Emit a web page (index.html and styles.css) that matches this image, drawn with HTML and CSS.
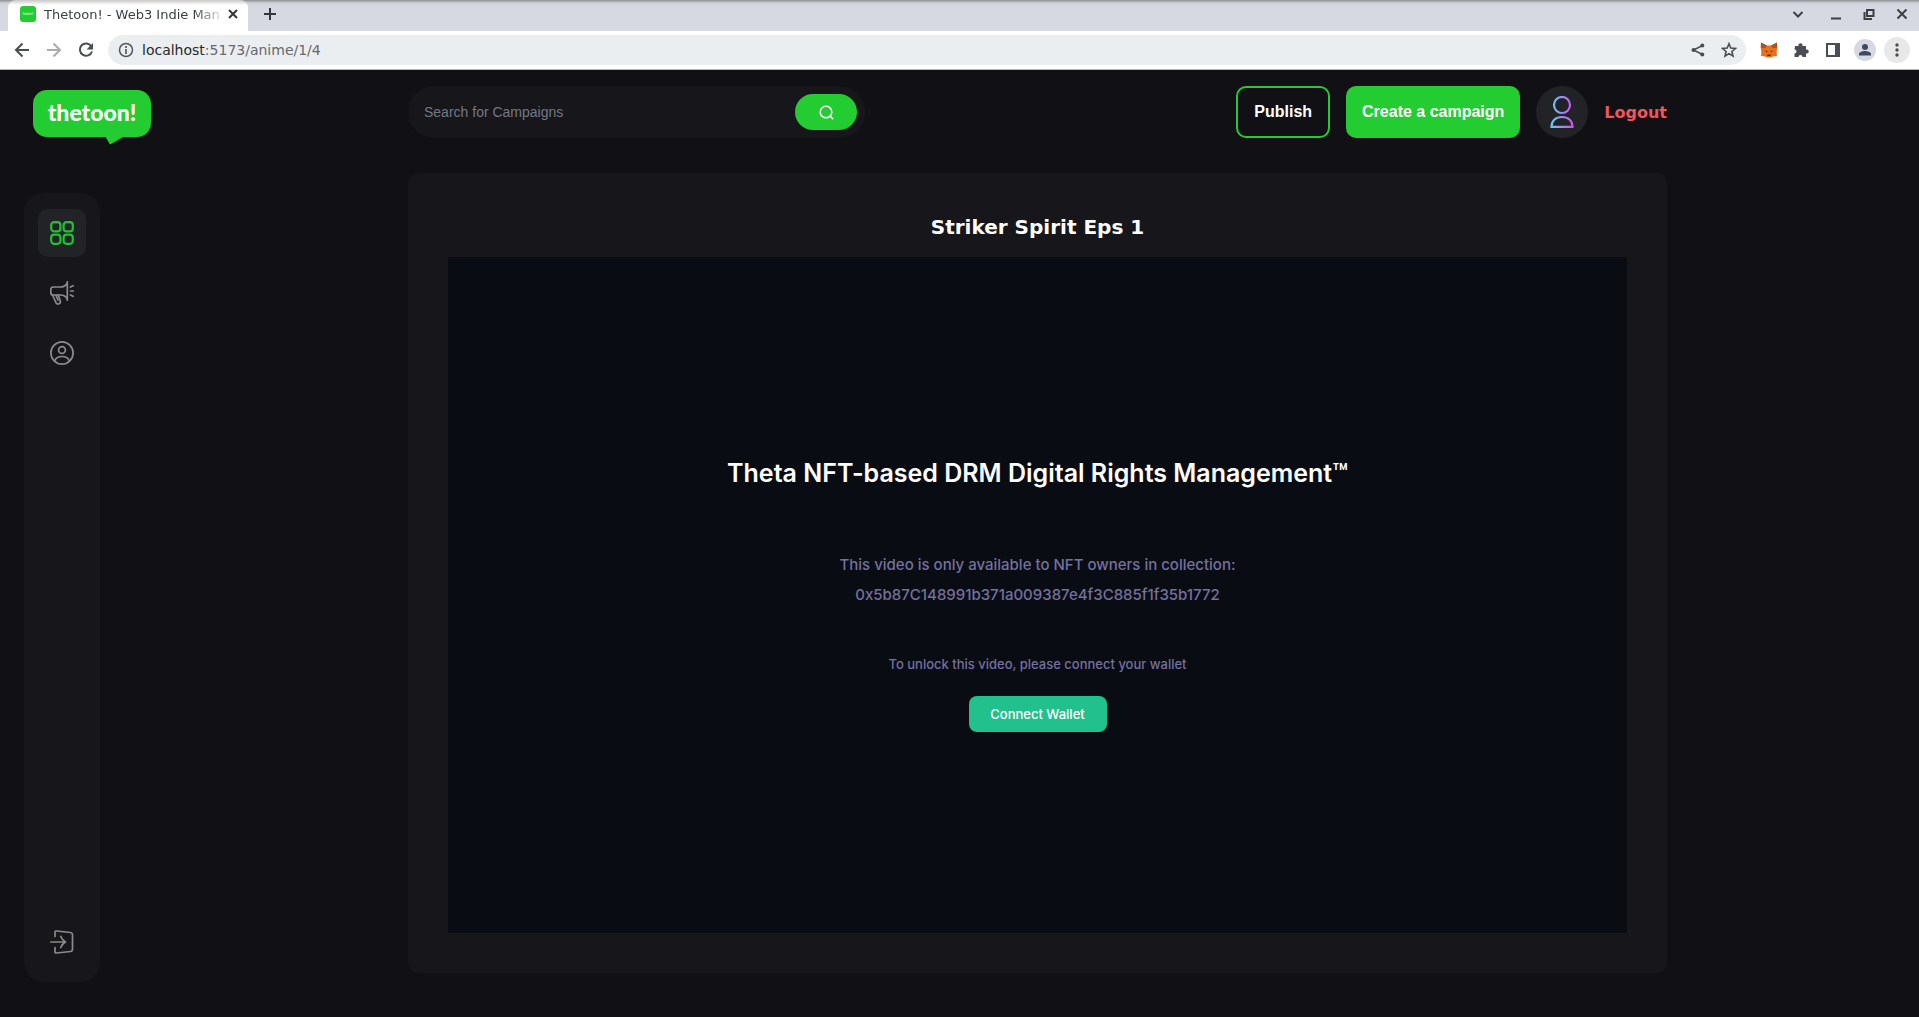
FILE: index.html
```html
<!DOCTYPE html>
<html lang="en">

<head>
  <meta charset="UTF-8" />
  <meta name="viewport" content="width=device-width, initial-scale=1" />
  <title>Thetoon! - Web3 Indie Manga</title>
  <link rel="stylesheet" href="styles.css">
</head>

<body>

  <!-- Browser window -->
  <div class="browser">
    <div class="tabstrip">
      <div class="tab">
        <span class="favicon">toon!</span>
        <span class="tab-title">Thetoon! - Web3 Indie Man</span>
        <button class="tab-close" aria-label="Close tab">
          <svg width="10" height="10" viewBox="0 0 10 10"><path d="M1 1l8 8M9 1l-8 8" stroke="#33363a" stroke-width="2" /></svg>
        </button>
      </div>
      <button class="new-tab" aria-label="New tab">
        <svg width="12" height="12" viewBox="0 0 12 12"><path d="M6 0v12M0 6h12" stroke="#33363a" stroke-width="2" /></svg>
      </button>
      <div class="window-controls">
        <button class="win-btn win-list" aria-label="Search tabs">
          <svg width="12" height="12" viewBox="0 0 12 12"><path d="M1.500 4L6 8.500 10.500 4" fill="none" stroke="#3c4043" stroke-width="2" /></svg>
        </button>
        <button class="win-btn" aria-label="Minimize">
          <svg width="12" height="12" viewBox="0 0 12 12"><path d="M1 10.500h10" stroke="#3c4043" stroke-width="2" /></svg>
        </button>
        <button class="win-btn" aria-label="Restore">
          <svg width="12" height="12" viewBox="0 0 12 12"><path d="M4 2h6.500v6H4zM1.500 4v7H9" fill="none" stroke="#3c4043" stroke-width="2" /></svg>
        </button>
        <button class="win-btn" aria-label="Close">
          <svg width="12" height="12" viewBox="0 0 12 12"><path d="M1.500 1.500l9 9M10.500 1.500l-9 9" stroke="#3c4043" stroke-width="2" /></svg>
        </button>
      </div>
    </div>

    <div class="toolbar">
      <button class="tool" aria-label="Back">
        <svg width="16" height="16" viewBox="0 0 16 16"><path d="M15 8H2M8.500 1.500L2 8l6.500 6.500" fill="none" stroke="#4a4d51" stroke-width="2" /></svg>
      </button>
      <button class="tool" aria-label="Forward">
        <svg width="16" height="16" viewBox="0 0 16 16"><path d="M1 8h13M7.500 1.500L14 8l-6.500 6.500" fill="none" stroke="#a9abae" stroke-width="2" /></svg>
      </button>
      <button class="tool" aria-label="Reload">
        <svg width="16" height="16" viewBox="0 0 16 16"><path d="M13.300 4.200A6.200 6.200 0 1 0 14 9.500" fill="none" stroke="#4a4d51" stroke-width="2" /><path d="M15 1v6.500H8.500z" fill="#4a4d51" /></svg>
      </button>
      <div class="address">
        <svg width="16" height="16" viewBox="0 0 16 16"><circle cx="8" cy="8" r="6.500" fill="none" stroke="#55585c" stroke-width="1.500" /><path d="M8 7v5M8 4v2" stroke="#55585c" stroke-width="1.700" /></svg>
        <span class="url">localhost<span class="url-path">:5173/anime/1/4</span></span>
        <button class="tool" aria-label="Share">
          <svg width="14" height="14" viewBox="0 0 14 14"><path d="M11.500 2.500L2.500 7l9 4.500" fill="none" stroke="#4a4d51" stroke-width="1.500" /><circle cx="11.300" cy="2.500" r="2" fill="#4a4d51" /><circle cx="2.600" cy="7" r="2.100" fill="#4a4d51" /><circle cx="11.300" cy="11.500" r="2" fill="#4a4d51" /></svg>
        </button>
        <button class="tool" aria-label="Bookmark">
          <svg width="16" height="16" viewBox="0 0 16 16"><path d="M8 1.800l1.800 4.300 4.700.4-3.600 3 1.100 4.600L8 11.600l-4 2.500 1.100-4.600-3.600-3 4.700-.4z" fill="none" stroke="#4a4d51" stroke-width="1.600" /></svg>
        </button>
      </div>
      <div class="extensions">
        <button class="ext" aria-label="MetaMask">
          <svg width="18" height="16" viewBox="0 0 18 16">
            <path d="M1 .5l6 3h4l6-3 .2 5.500-.6 4 .4 4-4 .5-2 1H7l-2-1-4-.5.4-4-.6-4z" fill="#e8701c" />
            <path d="M1 .5l6 3L5.500 6 .8 6zM17 .5l-6 3L12.500 6h4.700z" fill="#a9532a" />
            <path d="M5 8.500l2.500.5-.5 1.500zM13 8.500l-2.500.5.5 1.500zM7.500 12.500h3l.3 1.500H7.200z" fill="#30333a" />
          </svg>
        </button>
        <button class="ext" aria-label="Extensions">
          <svg width="16" height="16" viewBox="0 0 16 16"><path d="M2 4h3.500a2.100 2.100 0 1 1 4 0H13v3.500a2.100 2.100 0 1 1 0 4V15H9.500a2 2 0 0 0-4 0H1.500v-3.500a2 2 0 0 0 0-4z" fill="#4a4d51" /></svg>
        </button>
        <button class="ext" aria-label="Side panel">
          <svg width="14" height="14" viewBox="0 0 14 14"><path d="M1 1h12v12H1z" fill="none" stroke="#4a4d51" stroke-width="2" /><path d="M9 1h5v12H9z" fill="#4a4d51" /></svg>
        </button>
        <button class="ext ext-profile" aria-label="Profile">
          <svg width="14" height="14" viewBox="0 0 14 14"><circle cx="7" cy="4" r="3" fill="#414960" /><path d="M1 12.500V11c0-2 3.500-3 6-3s6 1 6 3v1.500z" fill="#414960" /></svg>
        </button>
        <button class="ext ext-menu" aria-label="Menu">
          <svg width="4" height="16" viewBox="0 0 4 16"><g fill="#4a4d51"><circle cx="2" cy="3" r="1.700" /><circle cx="2" cy="8" r="1.700" /><circle cx="2" cy="13" r="1.700" /></g></svg>
        </button>
      </div>
    </div>
  </div>

  <!-- App -->
  <div class="app">
    <aside class="side">
      <a class="logo" href="#">thetoon!
        <svg class="logo-tail" width="20" height="9" viewBox="0 0 20 9"><path d="M0 0h20L5 8.500z" fill="#22cc31" /></svg>
      </a>
      <nav class="sidebar">
        <div class="sidebar-links">
          <a class="side-link active" href="#" aria-label="Dashboard">
            <svg width="24" height="24" viewBox="0 0 24 24" fill="none" stroke="#1fc232" stroke-width="2.200"><rect x="1.200" y="1.200" width="9.200" height="9.200" rx="3" /><rect x="13.600" y="1.200" width="9.200" height="9.200" rx="3" /><rect x="1.200" y="13.600" width="9.200" height="9.200" rx="3" /><rect x="13.600" y="13.600" width="9.200" height="9.200" rx="3" /></svg>
          </a>
          <a class="side-link" href="#" aria-label="Campaigns">
            <svg width="24" height="24" viewBox="0 0 24 24" fill="none" stroke="#8b8b8b" stroke-width="1.700" stroke-linecap="round" stroke-linejoin="round">
              <path d="M17.300.8v18.400M17.300 2c-1.500 2.500-3.500 4-6.500 4H3.300C1.800 6 .8 7 .8 8.500v3c0 1.500 1 2.500 2.500 2.500h7.500c3 0 5 1.500 6.500 4" />
              <path d="M2.500 14l3.500 7.700c1.500 2.500 5 1 4.300-1.700L8.300 14M6 14.500l2 4.500" />
              <path d="M20.500 6l2.600-1.300M20.500 10h3M20.500 14l2.600 1.300" />
            </svg>
          </a>
          <a class="side-link" href="#" aria-label="Profile">
            <svg width="24" height="24" viewBox="0 0 24 24" fill="none" stroke="#8b8b8b" stroke-width="1.700"><circle cx="12" cy="12" r="11.100" /><circle cx="12" cy="9" r="3.400" /><path d="M4.500 20c1.200-3 4-4.500 7.500-4.500s6.300 1.500 7.500 4.500" /></svg>
          </a>
        </div>
        <a class="side-link" href="#" aria-label="Logout">
          <svg width="24" height="24" viewBox="0 0 24 24" fill="none" stroke="#8b8b8b" stroke-width="1.700" stroke-linecap="round" stroke-linejoin="round">
            <path d="M5 6.500V2.300C5 1.300 5.500.9 6.500 1L20.500 2.500c1.300.2 2 .8 2 2v15c0 1.200-.7 1.800-2 2L6.500 23C5.500 23.100 5 22.700 5 21.700V17.500" />
            <path d="M.8 12H15.500M10.800 6.500c1 2.500 2.700 4.500 4.700 5.500-2 1-3.700 3-4.700 5.500" />
          </svg>
        </a>
      </nav>
    </aside>

    <main class="main">
      <header class="header">
        <form class="search">
          <input type="text" placeholder="Search for Campaigns" aria-label="Search for Campaigns">
          <button type="button" aria-label="Search">
            <svg width="15" height="15" viewBox="0 0 15 15" fill="none" stroke="#fff" stroke-width="1.500" stroke-linecap="round"><circle cx="7" cy="7" r="5.800" /><path d="M11.200 11.200l2.600 2.600" /></svg>
          </button>
        </form>
        <div class="actions">
          <button class="btn btn-outline">Publish</button>
          <button class="btn">Create a campaign</button>
          <a class="avatar" href="#" aria-label="Your profile">
            <svg width="24" height="32" viewBox="0 0 24 32" fill="none" stroke="url(#avatarGradient)" stroke-width="2.200">
              <defs>
                <linearGradient id="avatarGradient" gradientUnits="userSpaceOnUse" x1="1" y1="0" x2="23" y2="0">
                  <stop offset="0" stop-color="#62cdf5" />
                  <stop offset="1" stop-color="#d44ee8" />
                </linearGradient>
              </defs>
              <circle cx="12" cy="9" r="8" />
              <path d="M1.500 30.800C1.500 24.500 6 21 12 21s10.500 3.500 10.500 9.800z" />
            </svg>
          </a>
          <a class="logout" href="#">Logout</a>
        </div>
      </header>

      <section class="card">
        <h1>Striker Spirit Eps 1</h1>
        <div class="player">
          <h2>Theta NFT-based DRM Digital Rights Management™</h2>
          <p class="collection">This video is only available to NFT owners in collection:<br>0x5b87C148991b371a009387e4f3C885f1f35b1772</p>
          <p class="hint">To unlock this video, please connect your wallet</p>
          <button class="connect">Connect Wallet</button>
        </div>
      </section>
    </main>
  </div>

</body>

</html>
```

FILE: styles.css
```css
* {
  box-sizing: border-box;
}

body {
  margin: 0;
  min-height: 100vh;
  display: flex;
  flex-direction: column;
  background: #111014;
  font-family: "DejaVu Sans", sans-serif;
}

button {
  border: none;
  padding: 0;
  background: none;
  cursor: pointer;
}

a {
  text-decoration: none;
}

svg {
  display: block;
  flex: none;
}

/* Browser window */
.browser {
  background: #fff;
  border-bottom: 1px solid #b4b6b9;
}

.tabstrip {
  display: flex;
  align-items: center;
  height: 31px;
  padding: 0 11px 0 8px;
  background: linear-gradient(#8e9095, #cdd0d7 3px, #d6d9e1 6px);
}

.tab {
  display: flex;
  align-items: center;
  width: 240px;
  height: 31px;
  padding: 0 11px 3px 12px;
  gap: 8px;
  border-radius: 8px 8px 0 0;
  background: linear-gradient(#c8c8c8, #fff 5px);
}

.favicon {
  flex: none;
  width: 16px;
  height: 16px;
  border-radius: 3px;
  background: #22cc31;
  color: #fff;
  font-size: 4px;
  line-height: 16px;
  text-align: center;
}

.tab-title {
  flex: 1;
  white-space: nowrap;
  font-size: 13px;
  color: #3c4043;
  mask-image: linear-gradient(to right, #000 85%, rgba(0, 0, 0, 0.2));
}

.new-tab {
  margin: 0 0 3px 16px;
}

.window-controls {
  display: flex;
  gap: 21px;
  margin: 0 0 3px auto;
}

.win-list {
  margin-right: 5px;
}

.toolbar {
  display: flex;
  align-items: center;
  height: 38px;
  padding: 0 9px 0 14px;
  gap: 16px;
}

.address {
  flex: 1;
  display: flex;
  align-items: center;
  height: 30px;
  margin-left: -2px;
  padding: 0 9px 0 10px;
  gap: 8px;
  border-radius: 15px;
  background: #ebeef0;
}

.url {
  flex: 1;
  font-size: 14px;
  color: #26282b;
}

.url-path {
  color: #66696d;
}

.address .tool {
  margin-left: 8px;
}

.extensions {
  display: flex;
  align-items: center;
  gap: 6px;
  margin-left: -6px;
}

.ext {
  display: flex;
  align-items: center;
  justify-content: center;
  width: 26px;
  height: 26px;
}

.ext-profile,
.ext-menu {
  border-radius: 50%;
}

.ext-profile {
  width: 22px;
  height: 22px;
  margin: 0 2px;
  background: #d6d9e1;
}

.ext-menu {
  background: #e8e8e8;
}

/* App layout */
.app {
  flex: 1;
  display: flex;
  padding: 16px 24px;
}

.side {
  flex: none;
  display: flex;
  flex-direction: column;
  width: 137px;
  margin: 4px 40px 19px 0;
}

.logo {
  position: relative;
  width: 118px;
  height: 47px;
  margin: 0 0 56px 9px;
  border-radius: 14px;
  background: #22cc31;
  color: #fff;
  font-family: Lato, sans-serif;
  font-size: 23px;
  font-weight: 900;
  line-height: 44px;
  text-align: center;
}

.logo-tail {
  position: absolute;
  left: 72px;
  top: 46px;
}

.sidebar {
  flex: 1;
  display: flex;
  flex-direction: column;
  justify-content: space-between;
  align-items: center;
  width: 76px;
  padding: 16px 0;
  border-radius: 20px;
  background: #17161b;
}

.sidebar-links {
  display: flex;
  flex-direction: column;
  gap: 12px;
}

.side-link {
  display: flex;
  align-items: center;
  justify-content: center;
  width: 48px;
  height: 48px;
  border-radius: 10px;
}

.side-link.active {
  background: #212326;
}

.main {
  flex: 1;
  display: flex;
  flex-direction: column;
  max-width: 1280px;
  margin: 0 auto 28px;
  padding-right: 21px;
}

/* Header */
.header {
  display: flex;
  justify-content: space-between;
  gap: 24px;
  margin-bottom: 35px;
}

.search {
  flex: 1;
  display: flex;
  max-width: 457px;
  height: 52px;
  padding: 8px 8px 8px 16px;
  border-radius: 26px;
  background: #17161b;
}

.search input {
  flex: 1;
  min-width: 0;
  padding: 0;
  border: none;
  outline: none;
  background: transparent;
  color: #fff;
  font-family: "Liberation Sans", sans-serif;
  font-size: 14px;
}

.search input::placeholder {
  color: #737885;
}

.search button {
  display: flex;
  align-items: center;
  justify-content: center;
  width: 62px;
  border-radius: 20px;
  background: #22cc31;
}

.actions {
  display: flex;
  align-items: center;
  gap: 16px;
}

.btn {
  height: 52px;
  padding: 0 16px;
  border-radius: 10px;
  background: #22cc31;
  color: #fff;
  font-family: "Liberation Sans", sans-serif;
  font-size: 16px;
  font-weight: bold;
}

.btn-outline {
  border: 2px solid #22cc31;
  background: transparent;
}

.avatar {
  display: flex;
  align-items: center;
  justify-content: center;
  width: 52px;
  height: 52px;
  border-radius: 50%;
  background: #212326;
}

.logout {
  color: #f0555a;
  font-size: 16px;
  font-weight: bold;
}

/* Video card */
.card {
  flex: 1;
  display: flex;
  flex-direction: column;
  padding: 40px;
  border-radius: 10px;
  background: #17161b;
}

h1 {
  margin: 0 0 16px;
  color: #fff;
  font-size: 20px;
  line-height: 28px;
  text-align: center;
}

.player {
  flex: 1;
  display: flex;
  flex-direction: column;
  align-items: center;
  justify-content: center;
  padding-bottom: 2px;
  background: #090c13;
  color: #74709f;
  font-family: Inter, sans-serif;
  font-weight: 500;
}

h2 {
  margin: 0 0 61px;
  color: #fff;
  font-size: 25px;
  font-weight: 600;
  line-height: 32px;
}

.collection {
  margin: 0 0 42px;
  font-size: 15px;
  line-height: 30px;
  text-align: center;
}

.hint {
  margin: 0 0 20px;
  font-size: 13px;
  line-height: 24px;
}

.connect {
  width: 138px;
  height: 36px;
  border-radius: 8px;
  background: #22c08c;
  color: #fff;
  font-family: Inter, sans-serif;
  font-size: 13px;
  font-weight: 500;
}
```
